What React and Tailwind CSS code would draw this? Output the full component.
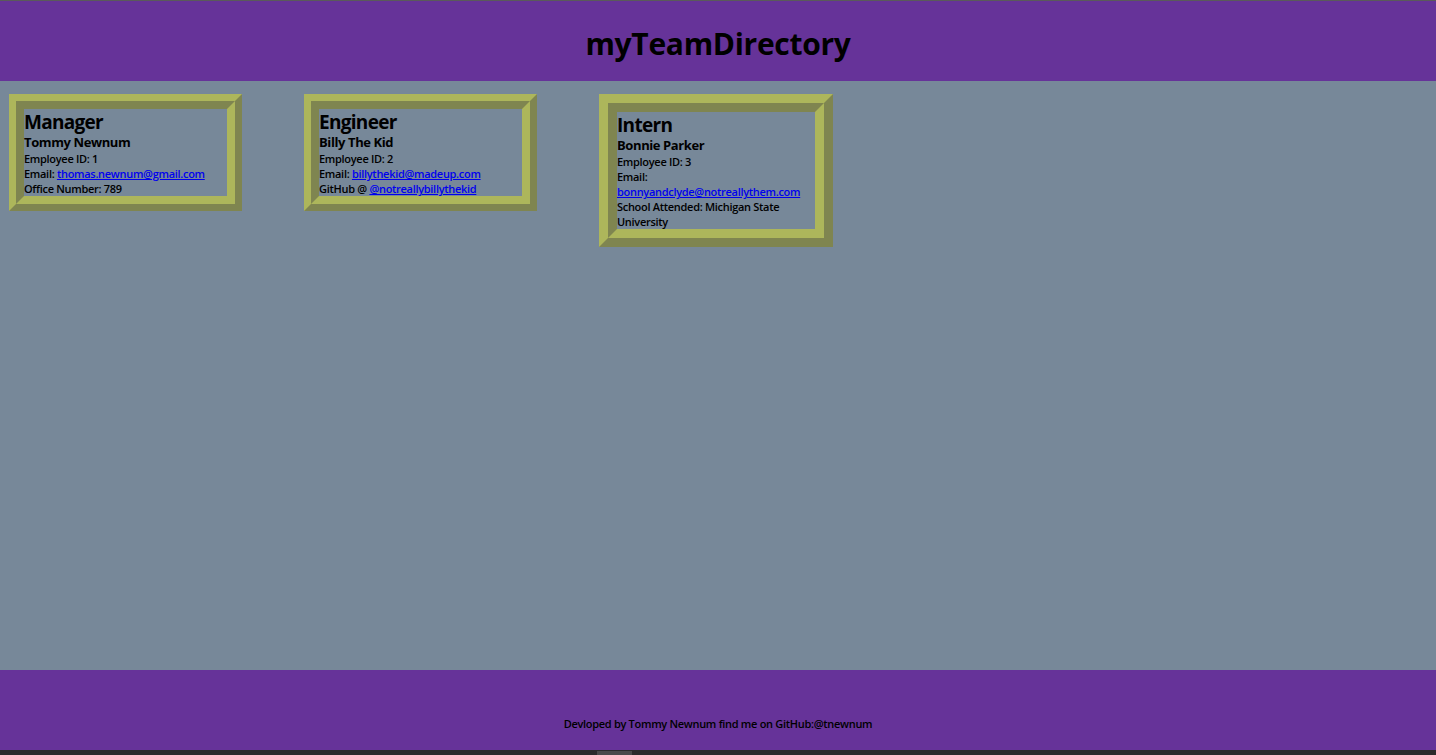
import React from "react";

const font = { fontFamily: '"Open Sans", "Noto Sans", sans-serif' };

function Card({ title, name, outer, inner, children, w }) {
  return (
    <div
      className={`shrink-0 border-t-[#adb65b] border-l-[#adb65b] border-b-[#7f8550] border-r-[#7f8550] border-solid ${outer}`}
    >
      <div
        className={`border-t-[#7f8550] border-l-[#7f8550] border-b-[#adb65b] border-r-[#adb65b] border-solid ${inner} ${w}`}
      >
        <div className="text-[19px] leading-[25px] pt-[1px] -mb-[1px] font-bold tracking-[-0.7px]">{title}</div>
        <div className="text-[13px] leading-[17px] font-bold tracking-[-0.4px]">{name}</div>
        <div className="text-[11px] leading-[15px] font-semibold tracking-[-0.3px]">{children}</div>
      </div>
    </div>
  );
}

const A = ({ children }) => (
  <a href="#" className="text-[#0000ee] underline">
    {children}
  </a>
);

export default function App() {
  return (
    <div style={font} className="w-[1436px] h-[755px] flex flex-col bg-[#778899] text-black overflow-hidden">
      <div className="h-[1px] bg-[#5a5a5a]" />
      <header className="h-[80px] bg-[#663399] flex items-center justify-center pt-[6px]">
        <h1 className="text-[30px] font-bold leading-none tracking-[-0.3px]">myTeamDirectory</h1>
      </header>
      <main className="flex-1 flex items-start gap-[62px] pl-[9px] pt-[13px]">
        <Card title="Manager" name="Tommy Newnum" outer="border-[7px]" inner="border-[8px]" w="w-[219px]">
          <div>Employee ID: 1</div>
          <div>
            Email: <A>thomas.newnum@gmail.com</A>
          </div>
          <div>Office Number: 789</div>
        </Card>
        <Card title="Engineer" name="Billy The Kid" outer="border-[7px]" inner="border-[8px]" w="w-[219px]">
          <div>Employee ID: 2</div>
          <div>
            Email: <A>billythekid@madeup.com</A>
          </div>
          <div>
            GitHub @ <A>@notreallybillythekid</A>
          </div>
        </Card>
        <Card title="Intern" name="Bonnie Parker" outer="border-[9px]" inner="border-[9px]" w="w-[216px]">
          <div>Employee ID: 3</div>
          <div>
            Email: <A>bonnyandclyde@notreallythem.com</A>
          </div>
          <div>School Attended: Michigan State University</div>
        </Card>
      </main>
      <footer className="h-[80px] bg-[#663399] flex items-end justify-center pb-[19px]">
        <p className="text-[11px] leading-[15px] font-semibold tracking-[-0.3px]">
          Devloped by Tommy Newnum find me on GitHub:@tnewnum
        </p>
      </footer>
      <div className="h-[5px] bg-[#2b2b2b] relative">
        <div className="absolute left-[597px] top-[1px] w-[35px] h-[4px] bg-[#4a4a4a]" />
      </div>
    </div>
  );
}
